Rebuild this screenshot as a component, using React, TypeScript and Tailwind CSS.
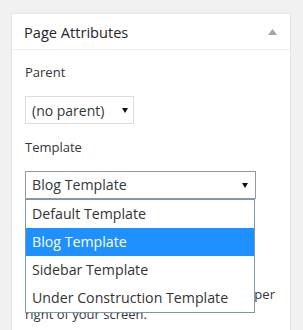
const font = { fontFamily: '"Open Sans", "Liberation Sans", sans-serif' };

function Arrow() {
  return (
    <svg width="6" height="5" viewBox="0 0 6 5" className="shrink-0">
      <polygon points="0,0 6,0 3,5" fill="#111" />
    </svg>
  );
}

const templates = ["Default Template", "Blog Template", "Sidebar Template", "Under Construction Template"];

export default function App() {
  return (
    <div className="h-[330px] w-[303px] overflow-hidden bg-[#f1f1f1] pl-[11px] pt-[13px]" style={font}>
      <div className="h-[330px] w-[280px] border border-[#e5e5e5] bg-white shadow-[0_1px_1px_rgba(0,0,0,0.04)]">
        {/* Header */}
        <div className="flex h-[36px] items-center justify-between border-b border-[#eee] pl-[12px] pr-[13px]">
          <h2 className="text-[14.6px] leading-5 text-[#23282d]">Page Attributes</h2>
          <svg width="9" height="6" viewBox="0 0 9 6">
            <polygon points="0,6 9,6 4.5,0" fill="#a0a5aa" />
          </svg>
        </div>

        {/* Body */}
        <div className="pl-[13px] pr-[12px] pt-[12px] text-[13px] text-[#32373c]">
          <p className="leading-5">Parent</p>
          <div className="mt-[14px] flex h-[28px] w-[109px] items-center justify-between border border-[#ddd] pl-[6px] pr-[5px] text-[14px] text-[#32373c]">
            <span>(no parent)</span>
            <Arrow />
          </div>

          <p className="mt-[13px] leading-5">Template</p>
          <div className="relative mt-[14px]">
            <div className="flex h-[28px] w-[231px] items-center justify-between border border-[#999] pl-[6px] pr-[7px] text-[14.2px] text-[#32373c]">
              <span>Blog Template</span>
              <Arrow />
            </div>
            {/* Open option list */}
            <ul className="absolute left-0 top-full z-10 w-[230px] border border-[#7a96b4] bg-white text-[14.2px]">
              {templates.map((t) => (
                <li
                  key={t}
                  className={`flex h-[28px] items-center pl-[6px] ${
                    t === "Blog Template" ? "bg-[#1e90ff] text-white" : "text-[#333]"
                  }`}
                >
                  {t}
                </li>
              ))}
            </ul>
          </div>

          <p className="mt-[13px] leading-5">Order</p>
          <div className="mt-[14px] h-[28px] w-[56px] border border-[#ddd] pl-[6px] text-[14px] leading-[26px]">0</div>

          <p className="mt-[10px] leading-[20px] text-[#32373c]">
            Need help? Use the Help tab in the upper right of your screen.
          </p>
        </div>
      </div>
    </div>
  );
}
